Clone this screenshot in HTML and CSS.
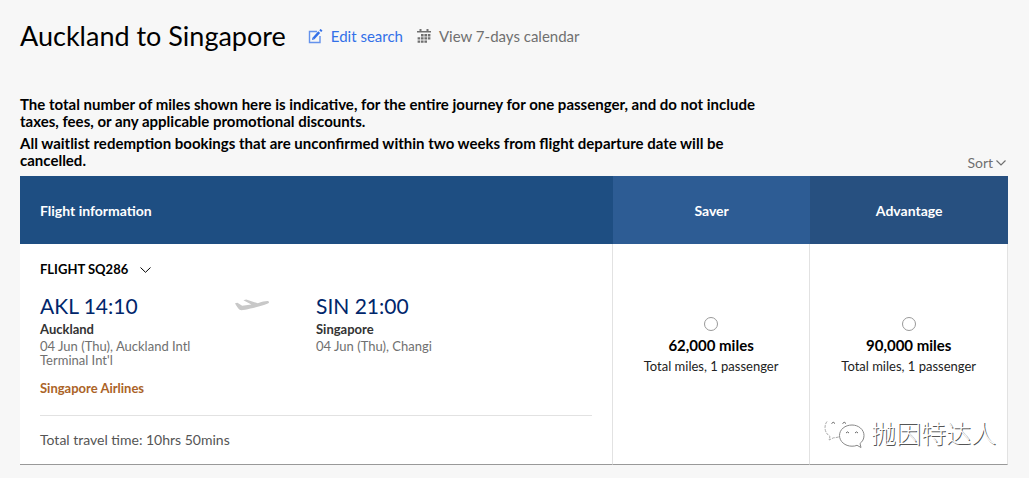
FILE: index.html
```html
<!DOCTYPE html>
<html lang="en">
<head>
    <meta charset="UTF-8">
    <meta name="viewport" content="width=device-width, initial-scale=1.0">
    <title>Auckland to Singapore</title>
    <link rel="stylesheet" href="styles.css">
</head>
<body>
    <header class="search-header">
        <h1>Auckland to Singapore</h1>
        <a href="#" class="edit-link">
            <svg width="15" height="15" viewBox="0 0 15 15" fill="none" stroke="currentColor">
                <path d="M9 2.5H1.5V13.5H12V7" stroke-opacity=".75" stroke-width="1.4"/>
                <path d="M5.5 9.5L11.2 3.2" stroke-width="2.6"/>
                <path d="M12.2 2.2L13.6 .8" stroke-width="2.6"/>
                <path d="M4 11l.5-2.5 2 1.8z" fill="currentColor" stroke="none"/>
            </svg>
            Edit search
        </a>
        <a href="#" class="calendar-link">
            <svg width="14" height="16" viewBox="0 0 14 16" fill="currentColor">
                <path d="M0 3h14v1.6H0zM2.5 1h2v3h-2zM9.5 1h2v3h-2z"/>
                <path d="M4 6h2.6v2.4H4zM7.4 6H10v2.4H7.4zM10.8 6h2.6v2.4h-2.6zM.6 9.2h2.6v2.4H.6zM4 9.2h2.6v2.4H4zM7.4 9.2H10v2.4H7.4zM10.8 9.2h2.6v2.4h-2.6zM.6 12.4h2.6v2.4H.6zM4 12.4h2.6v2.4H4zM7.4 12.4H10v2.4H7.4z"/>
            </svg>
            View 7-days calendar
        </a>
    </header>

    <section class="notice-row">
        <div class="notice">
            <p>The total number of miles shown here is indicative, for the entire journey for one passenger, and do not include taxes, fees, or any applicable promotional discounts.</p>
            <p>All waitlist redemption bookings that are unconfirmed within two weeks from flight departure date will be cancelled.</p>
        </div>
        <button type="button" class="sort">
            Sort
            <svg width="10" height="6" viewBox="0 0 10 6" fill="none" stroke="currentColor" stroke-width="1.2"><path d="M.5 .5L5 5L9.5 .5"/></svg>
        </button>
    </section>

    <main class="results">
        <table>
            <thead>
                <tr>
                    <th class="col-info">Flight information</th>
                    <th class="col-saver">Saver</th>
                    <th class="col-advantage">Advantage</th>
                </tr>
            </thead>
            <tbody>
                <tr>
                    <td class="info">
                        <button type="button" class="flight-no">
                            FLIGHT SQ286
                            <svg width="11" height="6" viewBox="0 0 11 6" fill="none" stroke="currentColor"><path d="M.5 .5L5.5 5.3L10.5 .5"/></svg>
                        </button>
                        <div class="legs">
                            <div class="airport">
                                <div class="time">AKL 14:10</div>
                                <div class="city">Auckland</div>
                                <div class="detail">04 Jun (Thu), Auckland Intl<br>Terminal Int'l</div>
                            </div>
                            <svg class="plane" width="35" height="12" viewBox="0 0 35 12" fill="#c8c8c8">
                                <path d="M0 4.2L2.4 3.8L7.2 6.8L16.4 5.6L8.4 1.2L11.2 .6L22.8 4.2C27 2.8 30.4 2 32.6 2.1C34.6 2.4 34.4 3.8 32.8 4.6C28 6.8 22 8 15.4 9.6C11 10.7 7.4 11.4 5 11.1C3 9.4 1.4 7 0 4.2z"/>
                            </svg>
                            <div class="airport">
                                <div class="time">SIN 21:00</div>
                                <div class="city">Singapore</div>
                                <div class="detail">04 Jun (Thu), Changi</div>
                            </div>
                        </div>
                        <div class="airline">Singapore Airlines</div>
                        <div class="total-time">Total travel time: 10hrs 50mins</div>
                    </td>
                    <td class="fare">
                        <label>
                            <input type="radio" name="fare" value="saver">
                            <span class="miles">62,000 miles</span>
                            <span class="passenger">Total miles, 1 passenger</span>
                        </label>
                    </td>
                    <td class="fare">
                        <label>
                            <input type="radio" name="fare" value="advantage">
                            <span class="miles">90,000 miles</span>
                            <span class="passenger">Total miles, 1 passenger</span>
                        </label>
                    </td>
                </tr>
            </tbody>
        </table>

        <div class="watermark">
            <svg width="42" height="34" viewBox="0 0 42 34" fill="#fff" stroke-width="1">
                <path d="M16 19.500C14 20.300 11.500 21.800 9.500 21.800L5 24L6 20.500C2.500 18 1 15 1 11.500C1 5.500 7 1.500 14 1.500C21 1.500 26 5 27.500 9" stroke="none"/>
                <path d="M3 5.500C1.500 7.500 1 9.500 1 11.500C1 15 2.500 18 6 20.500L5 24L9.500 21.800C11.500 21.800 14 21.300 16 20.500" fill="none" stroke="#aaa" stroke-dasharray="3 1"/>
                <path d="M28 9C34.500 9 40 13.500 40 19.500C40 23 38.500 25.500 36 27.500L37 31.500L33 29.300C31.500 30 30 30.200 28 30.200C21 30.200 15.500 25.500 15.500 19.500C15.500 13.500 21 9 28 9z" stroke="#888"/>
                <path d="M7.500 7.500q1.800-2.500 3.500 0M18.500 7.500q1.800-2.500 3.500 0M22 17q1.500-2.200 3 0M31 17q1.500-2.200 3 0" fill="none" stroke="#666"/>
            </svg>
            <span>抛因特达人</span>
        </div>
    </main>
</body>
</html>
```
FILE: styles.css
```css
* {
    box-sizing: border-box;
}

body {
    margin: 0;
    padding: 16px 21px 13px 20px;
    background: #f7f7f7;
    color: #000;
    font-family: Lato, "Noto Sans CJK SC", sans-serif;
    font-size: 13px;
}

h1, p {
    margin: 0;
}

button {
    padding: 0;
    border: 0;
    background: none;
    font-family: inherit;
    cursor: pointer;
}

.search-header {
    display: flex;
    align-items: center;
    height: 40px;
}

.search-header h1 {
    margin-right: 22px;
    font-size: 27px;
    font-weight: 400;
    line-height: 40px;
}

.search-header a {
    display: flex;
    align-items: center;
    gap: 8px;
    margin-right: 14px;
    font-size: 15px;
    text-decoration: none;
}

.edit-link {
    color: #3370e8;
}

.calendar-link {
    color: #707070;
}

.notice-row {
    display: flex;
    justify-content: space-between;
    align-items: flex-end;
    margin-top: 40px;
}

.notice {
    max-width: 765px;
    font-size: 15px;
    font-weight: 700;
    line-height: 17px;
}

.notice p {
    margin-bottom: 5px;
}

.sort {
    display: flex;
    align-items: center;
    gap: 3px;
    margin: 0 2px 3px 0;
    color: #707070;
    font-size: 14px;
    line-height: 17px;
}

.results {
    position: relative;
    margin-top: 2px;
}

table {
    width: 100%;
    border-collapse: separate;
    border-spacing: 0;
    table-layout: fixed;
}

th {
    height: 68px;
    padding: 0 20px;
    color: #fff;
    font-size: 14px;
    font-weight: 700;
    text-align: center;
}

.col-info {
    width: 60%;
    background: #1e4e82;
    text-align: left;
}

.col-saver {
    background: #2d5c94;
}

.col-advantage {
    background: #275080;
}

td {
    padding: 0;
    background: #fff;
    border-right: 1px solid #e2e2e2;
    border-bottom: 1px solid #999;
}

.info {
    padding: 17px 20px 16px;
    vertical-align: top;
}

.flight-no {
    display: flex;
    align-items: center;
    gap: 12px;
    font-size: 13px;
    font-weight: 700;
    line-height: 17px;
    color: #000;
}

.legs {
    display: grid;
    grid-template-columns: 195px 81px 1fr;
    margin-top: 14px;
}

.time {
    color: #00266b;
    font-size: 21px;
    line-height: 28px;
}

.plane {
    margin-top: 7px;
}

.city {
    color: #333;
    font-size: 13px;
    font-weight: 700;
    line-height: 18px;
}

.detail {
    color: #707070;
    line-height: 14px;
    margin-top: 1px;
}

.airline {
    margin-top: 13px;
    padding-bottom: 18px;
    border-bottom: 1px solid #e2e2e2;
    color: #ab6327;
    font-weight: 700;
    line-height: 17px;
}

.total-time {
    margin-top: 15px;
    color: #555;
    font-size: 14px;
    line-height: 17px;
}

.fare label {
    display: flex;
    flex-direction: column;
    align-items: center;
    padding-bottom: 16px;
}

.fare input {
    appearance: none;
    width: 14px;
    height: 14px;
    margin: 0;
    border: 1px solid #999;
    border-radius: 50%;
    background: #fff;
}

.fare input:checked {
    border: 4px solid #1e4e82;
}

.miles {
    margin-top: 4px;
    font-size: 15px;
    font-weight: 700;
    line-height: 20px;
}

.passenger {
    margin-top: 2px;
    color: #222;
    line-height: 18px;
}

/* account mark over the bottom right corner */
.watermark {
    position: absolute;
    right: 12px;
    bottom: 15px;
    display: flex;
    align-items: center;
    gap: 5px;
    color: #fff;
    font-size: 25px;
    font-weight: 300;
    line-height: 34px;
    text-shadow: 1px 1px 0 #555;
    pointer-events: none;
}
```
